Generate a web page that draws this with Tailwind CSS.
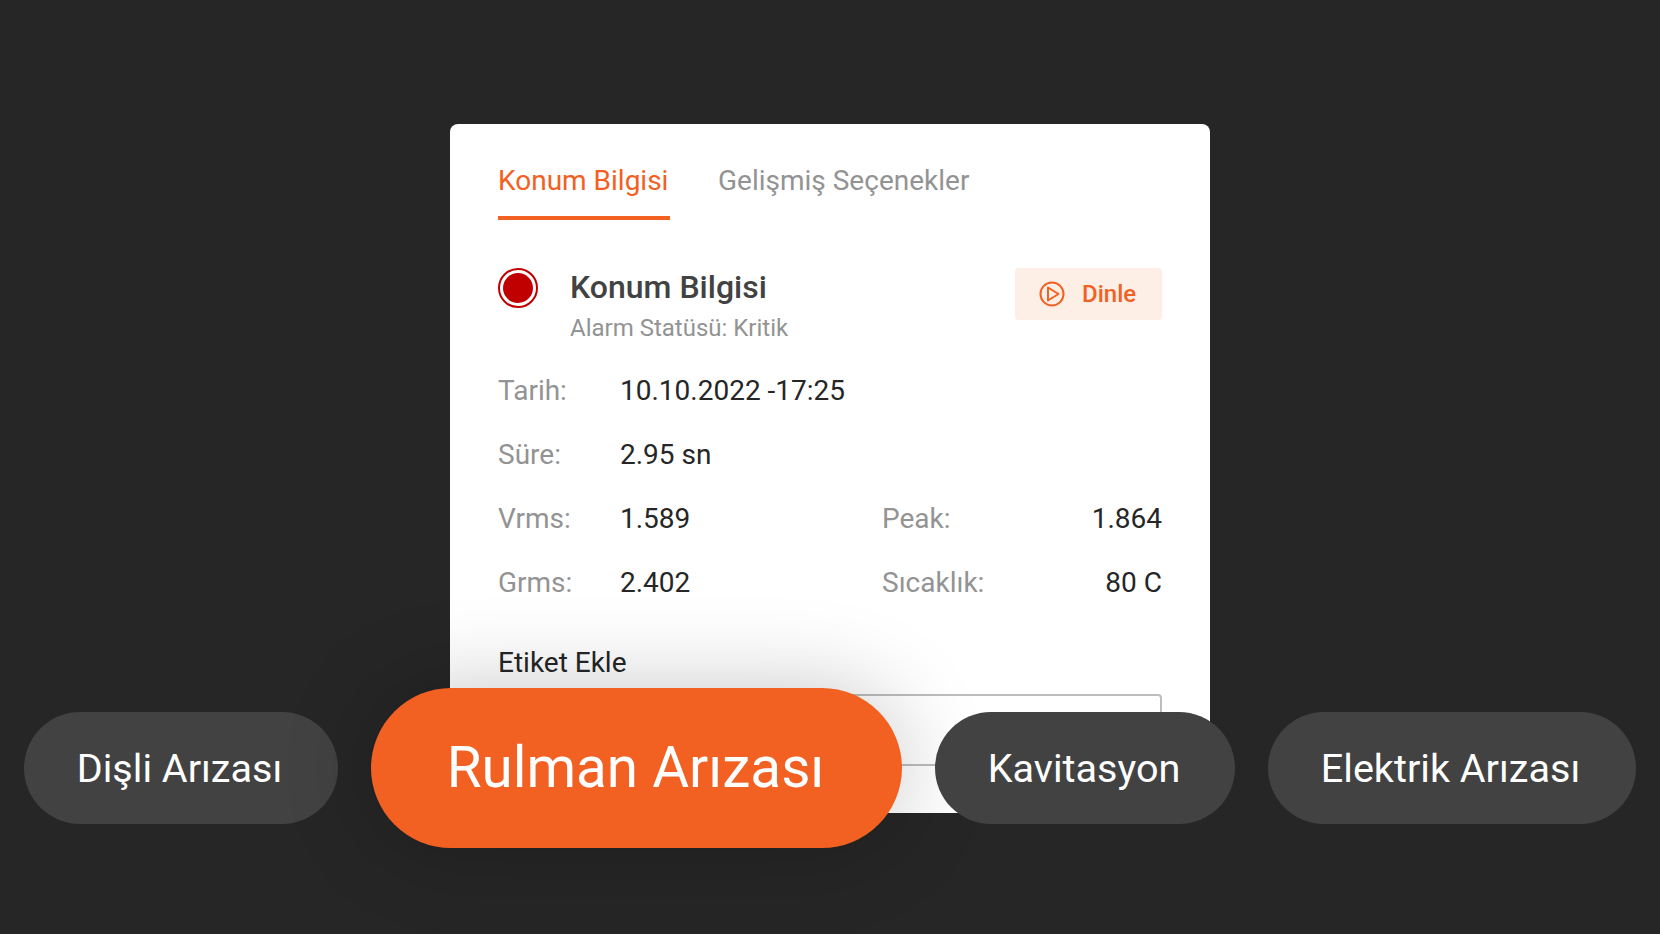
<!DOCTYPE html>
<html lang="en">
<head>
  <meta charset="UTF-8" />
  <title>Konum Bilgisi</title>
  <script src="https://cdn.jsdelivr.net/npm/@tailwindcss/browser@4"></script>
</head>
<body class="bg-[#262626] font-['Roboto',sans-serif] h-[934px] w-[1660px] overflow-hidden relative">

  <!-- Card -->
  <div class="w-[760px] h-[689px] mt-[124px] ml-[450px] absolute bg-white rounded-lg px-[48px] overflow-hidden">
    <!-- Tabs -->
    <div class="flex gap-[48px] h-[96px] text-[28px] text-[#939393]">
      <div class="w-[172px] pt-[36px] h-[96px] border-b-[4px] border-[#f26122] text-[#f26122] leading-[42px]">Konum Bilgisi</div>
      <div class="pt-[36px] leading-[42px]">Gelişmiş Seçenekler</div>
    </div>

    <!-- Header -->
    <div class="flex justify-between h-[139px] pt-[48px]">
      <div class="flex gap-[32px]">
        <div class="w-[40px] h-[40px] rounded-full border-2 border-[#c00000] p-[3px]">
          <div class="w-full h-full rounded-full bg-[#c00000]"></div>
        </div>
        <div class="mt-[-1px]">
          <div class="text-[32px] leading-[40px] font-medium text-[#424242]">Konum Bilgisi</div>
          <div class="text-[24px] leading-[32px] mt-[5px] text-[#939393]">Alarm Statüsü: Kritik</div>
        </div>
      </div>
      <div class="w-[147px] h-[52px] bg-[#fdeee6] rounded flex items-center pl-[24px] gap-[17px] text-[#f26122]">
        <svg class="w-[26px] h-[26px]" viewBox="0 0 26 26" fill="none" stroke="currentColor" stroke-width="2" stroke-linejoin="round">
          <circle cx="13" cy="13" r="11.5" />
          <path d="M9 6.5L19.5 13L9 19.5Z" />
        </svg>
        <span class="text-[24px] font-medium">Dinle</span>
      </div>
    </div>

    <!-- Values -->
    <div class="text-[28px] text-[#939393]">
      <div class="flex items-center h-[64px]">
        <span class="w-[122px]">Tarih:</span>
        <span class="text-[#262626]">10.10.2022 -17:25</span>
      </div>
      <div class="flex items-center h-[64px]">
        <span class="w-[122px]">Süre:</span>
        <span class="text-[#262626]">2.95 sn</span>
      </div>
      <div class="flex items-center h-[64px]">
        <span class="w-[122px]">Vrms:</span>
        <span class="w-[262px] text-[#262626]">1.589</span>
        <span>Peak:</span>
        <span class="flex-1 text-right text-[#262626]">1.864</span>
      </div>
      <div class="flex items-center h-[64px]">
        <span class="w-[122px]">Grms:</span>
        <span class="w-[262px] text-[#262626]">2.402</span>
        <span>Sıcaklık:</span>
        <span class="flex-1 text-right text-[#262626]">80 C</span>
      </div>
    </div>

    <!-- Tag input -->
    <div class="mt-[30px] text-[28px] leading-[36px] text-[#262626]">Etiket Ekle</div>
    <div class="mt-[13px] h-[72px] border-2 border-[#bdbdbd] rounded"></div>
  </div>

  <!-- Fault selector -->
  <div class="absolute left-0 top-[688px] w-full h-[160px] flex items-center justify-center gap-[33px] text-white text-[39.6px]">
    <div class="w-[314px] h-[112px] pt-[1px] pr-[3px] rounded-full bg-[#424242] flex items-center justify-center">Dişli Arızası</div>
    <div class="w-[531px] h-[160px] pr-[2px] rounded-full bg-[#f26122] flex items-center justify-center text-[56.6px] shadow-[0_0_90px_rgba(0,0,0,0.22)]">Rulman Arızası</div>
    <div class="w-[300px] h-[112px] pt-[1px] pr-[2px] rounded-full bg-[#424242] flex items-center justify-center">Kavitasyon</div>
    <div class="w-[368px] h-[112px] pt-[1px] pr-[3px] rounded-full bg-[#424242] flex items-center justify-center">Elektrik Arızası</div>
  </div>
</body>
</html>
